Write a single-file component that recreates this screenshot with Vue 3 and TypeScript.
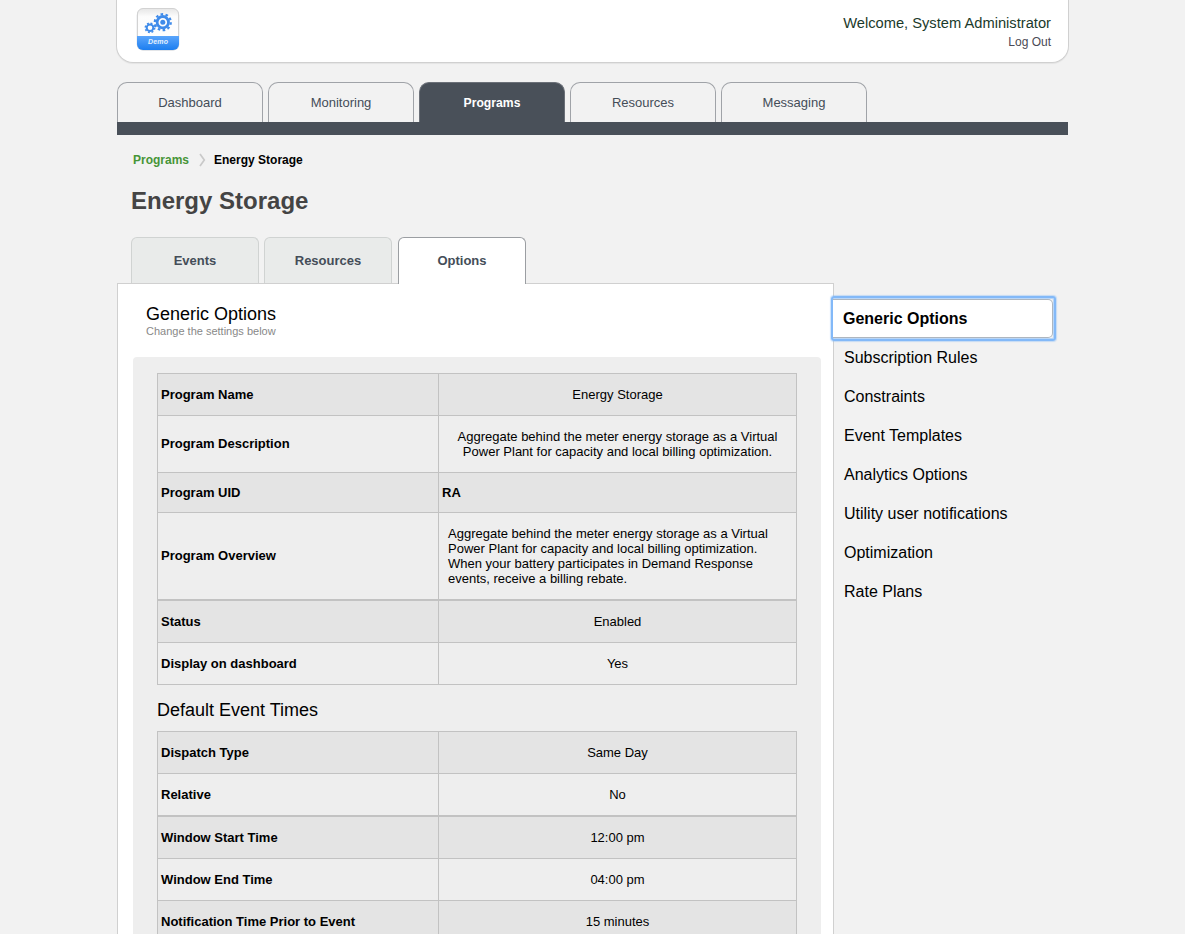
<script setup lang="ts">
interface Row {
  label: string
  value: string
  height: number
  kind?: 'uid' | 'overview' | 'description'
  thick?: boolean
}

interface NavTab {
  label: string
  active?: boolean
}

const mainTabs: NavTab[] = [
  { label: 'Dashboard' },
  { label: 'Monitoring' },
  { label: 'Programs', active: true },
  { label: 'Resources' },
  { label: 'Messaging' },
]

const subTabs: NavTab[] = [
  { label: 'Events' },
  { label: 'Resources' },
  { label: 'Options', active: true },
]

const sideItems: NavTab[] = [
  { label: 'Generic Options', active: true },
  { label: 'Subscription Rules' },
  { label: 'Constraints' },
  { label: 'Event Templates' },
  { label: 'Analytics Options' },
  { label: 'Utility user notifications' },
  { label: 'Optimization' },
  { label: 'Rate Plans' },
]

const summary =
  'Aggregate behind the meter energy storage as a Virtual Power Plant for capacity and local billing optimization.'

const generalRows: Row[] = [
  { label: 'Program Name', value: 'Energy Storage', height: 42 },
  { label: 'Program Description', value: summary, height: 57, kind: 'description' },
  { label: 'Program UID', value: 'RA', height: 40, kind: 'uid' },
  {
    label: 'Program Overview',
    value: summary + ' When your battery participates in Demand Response events, receive a billing rebate.',
    height: 88,
    kind: 'overview',
    thick: true,
  },
  { label: 'Status', value: 'Enabled', height: 42 },
  { label: 'Display on dashboard', value: 'Yes', height: 42 },
]

const timeRows: Row[] = [
  { label: 'Dispatch Type', value: 'Same Day', height: 42 },
  { label: 'Relative', value: 'No', height: 43, thick: true },
  { label: 'Window Start Time', value: '12:00 pm', height: 42 },
  { label: 'Window End Time', value: '04:00 pm', height: 42 },
  { label: 'Notification Time Prior to Event', value: '15 minutes', height: 42 },
]

const sections: { title?: string; rows: Row[] }[] = [
  { rows: generalRows },
  { title: 'Default Event Times', rows: timeRows },
]
</script>

<template>
  <div class="page">
    <header class="header">
      <svg class="logo" width="46" height="46" viewBox="0 0 46 46">
        <defs>
          <linearGradient id="blue" x1="0" y1="0" x2="0" y2="1">
            <stop offset="0" stop-color="#5aa5fb" />
            <stop offset="1" stop-color="#1c7ef0" />
          </linearGradient>
          <linearGradient id="face" x1="0" y1="0" x2="0" y2="1">
            <stop offset="0" stop-color="#e6e6e6" />
            <stop offset="0.2" stop-color="#fcfcfc" />
            <stop offset="1" stop-color="#ffffff" />
          </linearGradient>
        </defs>
        <rect x="1.8" y="3" width="42.4" height="41.6" rx="6" fill="#8f9aa6" opacity="0.5" />
        <rect x="2.5" y="2.5" width="41" height="41" rx="5.5" fill="url(#face)" stroke="#d2d2d2" />
        <path d="M2 30H44V38a6 6 0 0 1-6 6H8a6 6 0 0 1-6-6Z" fill="url(#blue)" />
        <g fill="none" stroke="#3f8bea">
          <circle cx="27.8" cy="16.2" r="5.7" stroke-width="2.8" />
          <circle cx="27.8" cy="16.2" r="8" stroke-width="2.2" stroke-dasharray="2.6 2.427" />
          <circle cx="15" cy="21.8" r="3.3" stroke-width="2" />
          <circle cx="15" cy="21.8" r="4.7" stroke-width="1.5" stroke-dasharray="1.9 1.791" />
        </g>
        <circle cx="27.8" cy="16.2" r="2.5" fill="#3f8bea" />
        <text x="23" y="37.8" text-anchor="middle" class="logo-text">Demo</text>
      </svg>
      <div class="account">
        <div class="welcome">Welcome, System Administrator</div>
        <a class="logout">Log Out</a>
      </div>
    </header>

    <nav class="main-nav">
      <a v-for="t in mainTabs" :key="t.label" class="main-tab" :class="{ active: t.active }">{{ t.label }}</a>
    </nav>

    <div class="crumbs">
      <a class="crumb-link">Programs</a>
      <svg class="chevron" width="7" height="14" viewBox="0 0 7 14">
        <path d="M1 1L5.3 7L1 13" fill="none" stroke="#c9c9c9" stroke-width="1.7" />
      </svg>
      <span>Energy Storage</span>
    </div>
    <h1 class="title">Energy Storage</h1>

    <nav class="sub-nav">
      <a v-for="t in subTabs" :key="t.label" class="sub-tab" :class="{ active: t.active }">{{ t.label }}</a>
    </nav>

    <div class="body">
      <main class="panel">
        <h2 class="panel-title">Generic Options</h2>
        <p class="panel-hint">Change the settings below</p>
        <div class="settings">
          <section v-for="(s, i) in sections" :key="i">
            <h3 v-if="s.title" class="section-title">{{ s.title }}</h3>
            <div class="table">
              <div
                v-for="r in s.rows"
                :key="r.label"
                class="row"
                :class="[r.kind, { thick: r.thick }]"
                :style="{ height: r.height + 'px' }"
              >
                <div class="label">{{ r.label }}</div>
                <div class="value"><span>{{ r.value }}</span></div>
              </div>
            </div>
          </section>
        </div>
      </main>
      <aside class="side">
        <a v-for="m in sideItems" :key="m.label" class="side-item" :class="{ active: m.active }">{{ m.label }}</a>
      </aside>
    </div>
  </div>
</template>

<style>
html,
body {
  margin: 0;
  background: #f2f2f2;
  overflow: hidden;
}
</style>

<style scoped>
.page {
  box-sizing: border-box;
  width: 951px;
  height: 934px;
  margin-left: 117px;
  font-family: 'Liberation Sans', Arial, Helvetica, sans-serif;
  font-size: 13px;
  color: #000;
}
.header {
  box-sizing: border-box;
  display: flex;
  justify-content: space-between;
  width: 953px;
  height: 63px;
  margin-left: -1px;
  padding: 6px 17px 0 19px;
  background: #fff;
  border: 1px solid #d0d0d0;
  border-top: 0;
  border-radius: 0 0 17px 17px;
  box-shadow: 0 1px 1px rgba(0, 0, 0, 0.06);
}
.logo {
  display: block;
  margin-left: -1px;
}
.logo-text {
  font-size: 7px;
  font-style: italic;
  font-weight: bold;
  letter-spacing: 0.2px;
  fill: #e3f0ff;
}
.account {
  padding-top: 8px;
  text-align: right;
}
.welcome {
  font-size: 14.7px;
  line-height: 18px;
  color: #1b3a2b;
}
.logout {
  display: block;
  margin-top: 2px;
  font-size: 12px;
  line-height: 16px;
  color: #4a4a55;
}
.main-nav {
  display: flex;
  gap: 5px;
  margin-top: 19px;
  border-bottom: 13px solid #495059;
}
.main-tab {
  box-sizing: border-box;
  width: 146px;
  height: 40px;
  border: 1px solid #a0a3a8;
  border-bottom: 0;
  border-radius: 10px 10px 0 0;
  line-height: 40px;
  text-align: center;
  color: #444d58;
}
.main-tab.active {
  background: #495059;
  border-color: #6b7078;
  color: #fff;
  font-size: 12.2px;
  font-weight: bold;
}
.crumbs {
  display: flex;
  align-items: center;
  height: 16px;
  margin: 17px 0 0 16px;
  font-size: 12px;
  font-weight: bold;
}
.crumb-link {
  color: #469537;
}
.chevron {
  margin: 0 8px 0 10px;
}
.title {
  margin: 19px 0 0 14px;
  font-size: 24px;
  line-height: 28px;
  color: #444;
}
.sub-nav {
  display: flex;
  gap: 5px;
  margin: 22px 0 0 14px;
}
.sub-tab {
  box-sizing: border-box;
  width: 128px;
  height: 46px;
  border: 1px solid #d0d3d2;
  border-bottom: 0;
  border-radius: 6px 6px 0 0;
  background: #e9ebea;
  line-height: 46px;
  text-align: center;
  font-weight: bold;
  color: #444d58;
}
.sub-tab.active {
  position: relative;
  height: 47px;
  margin: 0 0 -1px 1px;
  background: #fff;
  border-color: #9b9ea2;
}
.body {
  display: flex;
  height: 651px;
}
.panel {
  box-sizing: border-box;
  flex: none;
  width: 717px;
  height: 651px;
  padding: 20px 12px 0 15px;
  overflow: hidden;
  background: #fff;
  border: 1px solid #d0d0d0;
  border-bottom: 0;
}
.panel-title {
  margin: 0 0 0 13px;
  font-size: 18px;
  font-weight: normal;
  line-height: 20px;
}
.panel-hint {
  margin: 0 0 0 13px;
  font-size: 11px;
  line-height: 14px;
  color: #888;
}
.settings {
  width: 688px;
  height: 700px;
  box-sizing: border-box;
  margin-top: 19px;
  padding: 16px 24px 0;
  border-radius: 4px 4px 0 0;
  background: #eee;
}
.section-title {
  margin: 0;
  height: 46px;
  font-size: 18px;
  font-weight: normal;
  line-height: 51px;
}
.table {
  border: 1px solid #c2c2c2;
  border-bottom: 0;
}
.row {
  box-sizing: border-box;
  display: grid;
  grid-template-columns: 280px 1fr;
  border-bottom: 1px solid #c2c2c2;
}
.row:nth-child(odd) {
  background: #e4e4e4;
}
.row.thick {
  border-bottom-width: 2px;
}
.label,
.value {
  display: flex;
  align-items: center;
  line-height: 15px;
}
.label {
  padding-left: 3px;
  font-weight: bold;
}
.description .label,
.overview .label {
  padding-bottom: 2px;
}
.value {
  justify-content: center;
  padding: 0 17px;
  border-left: 1px solid #c2c2c2;
  text-align: center;
}
.uid .value {
  justify-content: flex-start;
  padding: 0 3px;
  font-weight: bold;
}
.overview .value {
  justify-content: flex-start;
  padding: 0 9px;
  text-align: left;
}
.overview .value span {
  width: 325px;
}
.side {
  padding-top: 16px;
}
.side-item {
  display: block;
  box-sizing: border-box;
  height: 39px;
  padding-left: 10px;
  font-size: 16px;
  line-height: 39px;
}
.side-item.active {
  position: relative;
  width: 220px;
  margin-left: -1px;
  border: 1px solid #aeb6bf;
  border-left: 0;
  border-radius: 0 5px 5px 0;
  background: #fff;
  line-height: 37px;
  font-weight: bold;
}
.side-item.active::after {
  content: '';
  position: absolute;
  inset: -4px -4px -4px -2px;
  border: 2px solid #83b9f8;
  border-radius: 3px;
  box-shadow:
    0 0 1px 1px rgba(131, 185, 248, 0.4),
    inset -1px 1px 0 #b9d6f7,
    inset -1px -1px 0 #b9d6f7;
}
</style>
